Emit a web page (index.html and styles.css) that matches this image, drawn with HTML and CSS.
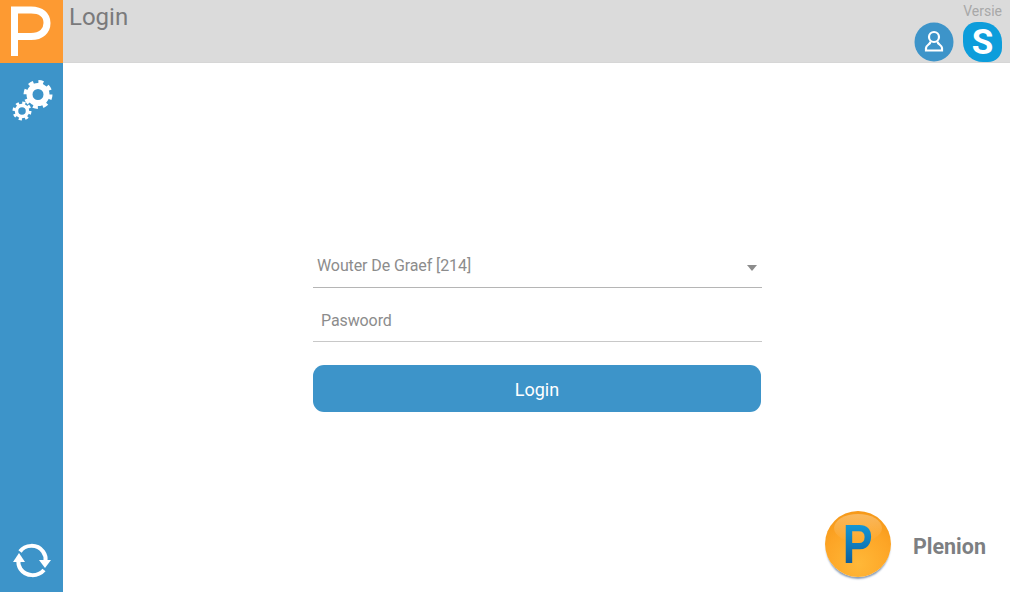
FILE: index.html
```html
<!DOCTYPE html>
<html lang="nl">
<head>
    <meta charset="UTF-8">
    <meta name="viewport" content="width=device-width, initial-scale=1.0">
    <title>Login</title>
    <link rel="stylesheet" href="styles.css">
</head>
<body>
    <div class="app">
        <div class="brand">
            <svg width="63" height="63" viewBox="0 0 63 63">
                <path d="M14.500 56V10H31C41.500 10 47 15.500 47 23S41.500 36.500 31 36.500H14.500" fill="none" stroke="#fff" stroke-width="7"/>
            </svg>
        </div>
        <header class="topbar">
            <h1 class="title">Login</h1>
            <div class="topbar-right">
                <span class="version">Versie</span>
                <div class="topbar-icons">
                    <svg width="40" height="40" viewBox="0 0 40 40">
                        <circle cx="20" cy="20" r="19.500" fill="#3d94c9"/>
                        <circle cx="20" cy="15" r="5" fill="none" stroke="#fff" stroke-width="2.200"/>
                        <path d="M16.500 19.500C16.500 22.500 12 23 12 26V28.500H28V26C28 23 23.500 22.500 23.500 19.500" fill="none" stroke="#fff" stroke-width="2.200"/>
                    </svg>
                    <div class="skype">S</div>
                </div>
            </div>
        </header>
        <nav class="sidebar">
            <svg width="42" height="42" viewBox="0 0 42 42">
                <circle cx="27" cy="15.500" r="8.500" fill="none" stroke="#fff" stroke-width="6"/>
                <circle cx="27" cy="15.500" r="12.500" fill="none" stroke="#fff" stroke-width="4" stroke-dasharray="4.900 4.920"/>
                <circle cx="11" cy="32" r="5.500" fill="none" stroke="#fff" stroke-width="3.500"/>
                <circle cx="11" cy="32" r="8" fill="none" stroke="#fff" stroke-width="3" stroke-dasharray="3.140 3.140"/>
            </svg>
            <svg width="42" height="42" viewBox="0 0 42 42">
                <path d="M9 12.500C14 5.500 26 4.500 32 12.500C34.500 16 35 19 34.500 22" fill="none" stroke="#fff" stroke-width="4"/>
                <path d="M28 21H40L34 29Z" fill="#fff"/>
                <path d="M33 31C27 38 15 38 9.500 30C7.500 27 7 24 7.500 21" fill="none" stroke="#fff" stroke-width="4"/>
                <path d="M2 23L8 14L14 23Z" fill="#fff"/>
            </svg>
        </nav>
        <main class="content">
            <form class="login-form">
                <div class="field select-field">
                    <span class="select-value">Wouter De Graef [214]</span>
                    <span class="select-arrow"></span>
                </div>
                <div class="field input-field">Paswoord</div>
                <button type="button" class="login-button">Login</button>
            </form>
            <div class="company">
                <div class="company-logo">
                    <span class="company-p">P</span>
                </div>
                <span class="company-name">Plenion</span>
            </div>
        </main>
    </div>
</body>
</html>
```

FILE: styles.css
```css
html, body {
    margin: 0;
    height: 100%;
}
body {
    font-family: 'Roboto', 'Liberation Sans', sans-serif;
    background-color: #fff;
    overflow: hidden;
}
.app {
    display: grid;
    grid-template-columns: 63px 1fr;
    grid-template-rows: 63px 1fr;
    height: 592px;
}
.brand {
    background-color: #fd9a32;
    display: flex;
}
.topbar {
    display: flex;
    justify-content: space-between;
    background-color: #dbdbdb;
    border-bottom: 1px solid #d6d6d6;
    box-sizing: border-box;
    padding: 0 8px 0 6px;
}
.title {
    margin: 3px 0 0;
    font-size: 24px;
    line-height: 28px;
    font-weight: 400;
    color: #7a7a7c;
}
.topbar-right {
    display: flex;
    flex-direction: column;
    align-items: flex-end;
}
.version {
    margin-top: 3px;
    font-size: 14px;
    line-height: 16px;
    color: #a8a8a8;
}
.topbar-icons {
    display: flex;
    gap: 9px;
    margin-top: 3px;
}
.skype {
    width: 39px;
    height: 40px;
    border-radius: 14px 20px 14px 20px;
    background-color: #0d9ddb;
    text-align: center;
    font-size: 35px;
    line-height: 41px;
    font-weight: 700;
    color: #fff;
}
.sidebar {
    display: flex;
    flex-direction: column;
    justify-content: space-between;
    align-items: center;
    background-color: #3d94c9;
    padding: 16px 0 11px;
}
.content {
    display: flex;
    flex-direction: column;
    align-items: center;
    justify-content: space-between;
    padding-top: 181px;
    padding-bottom: 15px;
}
.login-form {
    width: 449px;
    margin-left: 2px;
}
.field {
    display: flex;
    align-items: center;
    justify-content: space-between;
    box-sizing: border-box;
    font-size: 16px;
    letter-spacing: -0.1px;
    color: #8c8c8c;
}
.select-field {
    height: 44px;
    padding: 0 5px 0 4px;
    border-bottom: 1px solid #b5b5b5;
}
.select-arrow {
    width: 0;
    height: 0;
    margin-top: 5px;
    border-left: 5px solid transparent;
    border-right: 5px solid transparent;
    border-top: 6px solid #8c8c8c;
}
.input-field {
    height: 54px;
    padding-left: 8px;
    padding-top: 12px;
    border-bottom: 1px solid #c8c8c8;
}
.login-button {
    display: block;
    width: 448px;
    height: 47px;
    margin-top: 23px;
    padding-top: 3px;
    border: none;
    border-radius: 11px;
    font-family: inherit;
    font-size: 18px;
    color: #fff;
    background-color: #3d94c9;
}
.company {
    display: flex;
    align-items: center;
    gap: 22px;
    align-self: flex-end;
    padding-right: 24px;
}
.company-logo {
    position: relative;
    display: flex;
    align-items: center;
    justify-content: center;
    width: 66px;
    height: 66px;
    border-radius: 50%;
    background: radial-gradient(circle at 50% 80%, #ffb838, #fda526 55%, #f29212);
    box-shadow: 0 3px 2px -1px #8a9db5;
}
.company-logo::before {
    content: "";
    position: absolute;
    top: 3px;
    left: 9px;
    width: 48px;
    height: 28px;
    border-radius: 50%;
    background: linear-gradient(rgba(255, 255, 255, 0.3), rgba(255, 255, 255, 0));
}
.company-p {
    position: relative;
    font-family: 'Liberation Sans', sans-serif;
    font-size: 56px;
    line-height: 56px;
    font-weight: 700;
    transform: scaleX(0.8);
    background: linear-gradient(#14a3e2, #0f78b8 55%, #0d4f8a);
    -webkit-background-clip: text;
    background-clip: text;
    color: transparent;
}
.company-name {
    padding-top: 5px;
    font-size: 21.500px;
    font-weight: 700;
    color: #7d7f82;
}
```
